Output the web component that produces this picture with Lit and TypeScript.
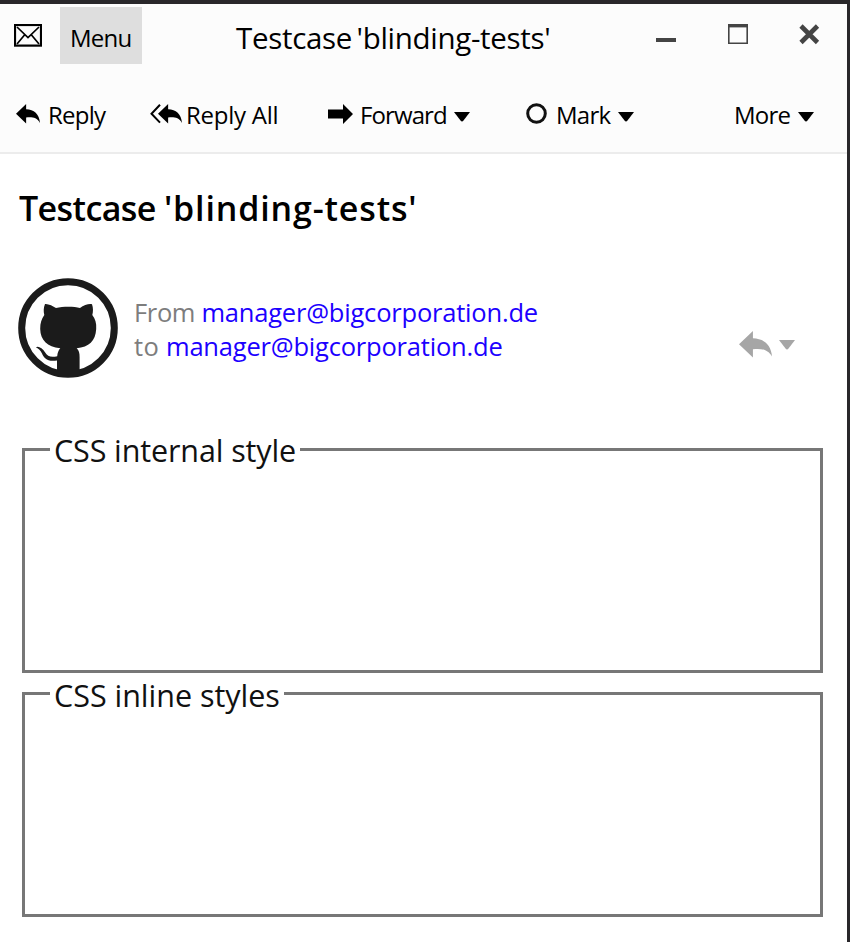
import { LitElement, html, css, svg } from "lit";
import { customElement } from "lit/decorators.js";

const caret = html`<svg class="caret" width="16" height="10" viewBox="0 0 16 10"><path d="M0 0H16L9.5 8.6Q8 10.4 6.5 8.6Z" fill="currentColor"/></svg>`;
const arrow = svg`<path d="M0 13.2L13.5 0V7.2C24 7.6 31 13.5 32 25.5C27.5 18 22 17.6 13.5 18.2V26.4Z" fill="currentColor"/>`;

@customElement("app-root")
export class AppRoot extends LitElement {
  static styles = css`
    :host { display: block; font-family: "Open Sans", "Noto Sans", sans-serif; color: #000; }
    * { box-sizing: border-box; }
    svg { display: block; flex: none; }
    .window { width: 850px; height: 942px; border-top: 4px solid #29272a; border-right: 3px solid #29272a; background: #fff; overflow: hidden; }
    .head { height: 150px; background: #fcfcfc; border-bottom: 2px solid #ececec; }
    .bar { display: flex; height: 64px; padding: 3px 0 0 14px; }
    .mail { margin-top: 17px; }
    .menu { width: 82px; height: 57px; margin-left: 18px; padding-left: 10px; line-height: 62px; font-size: 24px; background: #dedede; letter-spacing: -0.75px; }
    .title { width: 420px; margin-left: 94px; line-height: 61px; font-size: 29.5px; letter-spacing: -0.3px; word-spacing: -3px; }
    .min { margin: 31px 0 0; }
    .max { margin: 17px 0 0 52px; }
    .close { margin: 17px 0 0 51px; }
    .tools { display: flex; height: 84px; align-items: center; padding: 10px 0 0 16px; font-size: 24px; letter-spacing: -0.75px; color: #000; white-space: nowrap; }
    .tool { display: flex; align-items: center; flex: none; line-height: 40px; }
    .tool .label { flex: none; }
    .t1 { width: 134px; } .t2 { width: 178px; } .t3 { width: 198px; } .t4 { width: 208px; }
    .t1 .label { margin-left: 8px; } .t2 .label { width: 100px; margin-left: 3px; letter-spacing: -0.25px; }
    .t3 .label { width: 94px; margin-left: 7px; letter-spacing: -0.9px; } .t4 .label { width: 62px; margin-left: 9px; }
    .t5 .label { width: 64px; }
    .tool svg { margin-top: -3px; }
    .tool .caret { margin-top: 3px; }
    h1 { margin: 30px 0 0 19px; height: 48px; line-height: 48px; font-size: 34px; font-weight: 600; letter-spacing: 0.85px; white-space: nowrap; }
    .lead { letter-spacing: -0.6px; }
    .message { display: flex; margin: 46px 0 0 18px; height: 100px; }
    .who { width: 605px; flex: none; padding: 17px 0 0 16px; font-size: 25.5px; line-height: 34px; color: #7d7d7d; letter-spacing: -0.2px; }
    .key { letter-spacing: -0.35px; }
    .to { letter-spacing: 0.3px; }
    .addr { color: #1c00ff; }
    .actions { display: flex; flex: none; color: #a6a6a6; margin-left: 16px; padding-top: 53px; }
    .actions .caret { margin: 9px 0 0 7px; }
    .boxes { margin: 55px 24px 0 22px; }
    fieldset { margin: 0; padding: 0 0 0 26px; min-width: 0; border: 3px solid #707070; border-color: #777; height: 240px; }
    .f2 { margin-top: 4px; height: 240px; }
    legend { padding: 0 4px 0 4px; margin-left: -1px; height: 32px; line-height: 35px; font-size: 30.5px; letter-spacing: -0.12px; color: #111; white-space: nowrap; }
    .f2 legend { line-height: 36px; letter-spacing: -0.02px; }
  `;
  render() {
    return html`<div class="window">
      <div class="head">
        <div class="bar">
          <svg class="mail" width="28" height="23" viewBox="0 0 28 23" fill="none" stroke="#000"><rect x="1" y="1" width="26" height="20.6" stroke-width="2.2"/><path d="M3 3L14 13.5L25 3M3 20L10.5 11M25 20L17.5 11" stroke-width="1.7"/></svg>
          <div class="menu">Menu</div>
          <div class="title">Testcase 'blinding-tests'</div>
          <svg class="min" width="20" height="4"><path d="M0 0H20V4H0Z" fill="#444"/></svg>
          <svg class="max" width="20" height="20"><path d="M.8 1V19.2H19.2V1" fill="none" stroke="#444" stroke-width="1.6"/><path d="M0 0H20V3.4H0Z" fill="#444"/></svg>
          <svg class="close" width="21" height="21"><path d="M2 2L18.5 18.5M18.5 2L2 18.5" stroke="#444" stroke-width="4.6"/></svg>
        </div>
        <div class="tools">
          <div class="tool t1"><svg width="24" height="20" viewBox="0 0 32 27" preserveAspectRatio="none">${arrow}</svg><span class="label">Reply</span></div>
          <div class="tool t2"><svg width="33" height="20" viewBox="0 0 33 20"><path d="M10 .8L1.5 9.7L10 18.6" fill="none" stroke="#000" stroke-width="2"/><g transform="translate(8 0) scale(.75 .741)">${arrow}</g></svg><span class="label">Reply All</span></div>
          <div class="tool t3"><svg width="25" height="20"><path d="M0 5.5H15V0L25 10L15 20V14.5H0Z"/></svg><span class="label">Forward</span>${caret}</div>
          <div class="tool t4"><svg width="21" height="21"><circle cx="10.5" cy="10.5" r="8.8" fill="none" stroke="#111" stroke-width="3"/></svg><span class="label">Mark</span>${caret}</div>
          <div class="tool t5"><span class="label">More</span>${caret}</div>
        </div>
      </div>
      <h1><span class="lead">Testcase </span>'blinding-tests'</h1>
      <div class="message">
        <svg width="100" height="100" viewBox="0 0 100 100"><circle cx="50" cy="50" r="46.3" fill="#fff" stroke="#1b1b1b" stroke-width="7"/><path d="M27 26C30 25.5 35 28 38 30C45 28.4 56 28.4 62 30C66 27 71 25.6 74 26.3C75.3 30 75.2 34 74.3 37C77.3 41 78.6 45 78.2 51C77.5 63 71 69 58.7 70.3C61 72.5 61.6 75 61.6 79V98H39V82.5C29 84 26 80 24 75.5C22.5 72 20 70.5 18 69.5C19.5 67.5 24.5 69.8 27 74.3C29.5 78.7 33.5 79.7 39.2 78.2C39.5 75 40.5 72 42.3 70.3C29 69 22.5 62 22.2 51C22.1 45 23.6 41 26.3 37C25.4 33.5 25.5 29.5 27 26Z" fill="#1b1b1b"/></svg>
        <div class="who">
          <div><span class="key">From </span><span class="addr">manager@bigcorporation.de</span></div>
          <div><span class="to">to </span><span class="addr">manager@bigcorporation.de</span></div>
        </div>
        <div class="actions"><svg width="33" height="27" viewBox="0 0 32 27" preserveAspectRatio="none">${arrow}</svg>${caret}</div>
      </div>
      <div class="boxes">
        <fieldset><legend>CSS internal style</legend></fieldset>
        <fieldset class="f2"><legend>CSS inline styles</legend></fieldset>
      </div>
    </div>`;
  }
}
